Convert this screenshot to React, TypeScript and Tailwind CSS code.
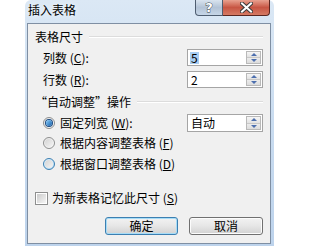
import React from 'react';

const font = "font-['Noto_Sans_CJK_SC','Microsoft_YaHei',sans-serif]";

const Spin: React.FC<{ value: string; selected?: boolean; tall?: boolean; wide?: boolean }> = ({ value, selected, tall }) => (
  <div className={`flex w-[76px] ${tall ? 'h-[18px]' : 'h-[17px]'} border border-[#a5a5a5] bg-white`}>
    <div className="flex flex-1 items-center pl-[2px] text-[12px] leading-none text-black">
      <span className={selected ? 'bg-[#a8cdf1] px-[1px]' : 'px-[1px]'}>{value}</span>
    </div>
    <div className="my-[1px] mr-[1px] flex w-[15px] flex-col border border-[#b9b9b9]">
      <div className="flex flex-1 items-center justify-center border-b border-[#c8c8c8] bg-gradient-to-b from-[#f6f6f6] to-[#e2e2e2]">
        <div className="h-0 w-0 border-x-[3px] border-b-[3px] border-x-transparent border-b-[#4d6fae]" />
      </div>
      <div className="flex flex-1 items-center justify-center bg-gradient-to-b from-[#ececec] to-[#dcdcdc]">
        <div className="h-0 w-0 border-x-[3px] border-t-[3px] border-x-transparent border-t-[#4d6fae]" />
      </div>
    </div>
  </div>
);

const Radio: React.FC<{ checked?: boolean; hover?: boolean }> = ({ checked, hover }) => (
  <div
    className={`flex h-[12px] w-[12px] items-center justify-center rounded-full border ${
      hover ? 'border-[#3c7fb1] bg-gradient-to-br from-[#e3f3fc] to-[#b5dcf6]' : 'border-[#8e8f8f] bg-gradient-to-br from-[#e8e8e8] to-[#fbfbfb]'
    }`}
  >
    {checked && <div className="h-[6px] w-[6px] rounded-full bg-gradient-to-br from-[#8ad1ff] to-[#0f5ea8] ring-1 ring-[#1b4a80]" />}
    {!checked && <div className="h-[8px] w-[8px] rounded-full bg-gradient-to-br from-[#d4d4d4] to-[#f4f4f4]" />}
  </div>
);

const GroupHead: React.FC<{ label: string; mt: string }> = ({ label, mt }) => (
  <div className={`flex h-[14px] items-center pl-[7px] pr-[7px] ${mt}`}>
    <span className="text-[12px] leading-none text-black">{label}</span>
    <div className="ml-[6px] h-0 flex-1 border-t border-[#dcdcdc] border-b-white border-b" />
  </div>
);

export default function App() {
  return (
    <div className={`h-[246px] w-[300px] overflow-hidden bg-white ${font}`}>
      <div className="relative ml-[25px] h-[246px] w-[249px] rounded-t-[6px] bg-gradient-to-b from-[#dbe8f5] via-[#c9dcf0] to-[#bdd3ec]">
        {/* title bar */}
        <div className="flex h-[23px] items-start">
          <span className="ml-[3px] mt-[3px] text-[12px] leading-[14px] text-black [text-shadow:0_0_6px_#ffffff]">插入表格</span>
        </div>
        {/* caption buttons */}
        <div className="absolute left-[170px] top-0 flex h-[16px]">
          <div className="flex h-[16px] w-[28px] items-center justify-center rounded-bl-[4px] border border-t-0 border-[#4e5d70] bg-gradient-to-b from-[#d9e4ef] via-[#b3c3d6] to-[#c6d6e7]">
            <span className="text-[13px] font-bold leading-none text-white font-['DejaVu_Sans',sans-serif] [-webkit-text-stroke:0.8px_#2e3440] [paint-order:stroke_fill]">?</span>
          </div>
          <div className="flex h-[16px] w-[47px] items-center justify-center rounded-br-[4px] border border-l-0 border-t-0 border-[#5a2620] bg-gradient-to-b from-[#e8a190] via-[#c75543] to-[#d57a64]">
            <svg width="13" height="11" viewBox="0 0 13 11">
              <path d="M2 1.5 L11 9.5 M11 1.5 L2 9.5" stroke="#3b3b3b" strokeWidth="4" strokeLinecap="square" />
              <path d="M2 1.5 L11 9.5 M11 1.5 L2 9.5" stroke="#ffffff" strokeWidth="2" strokeLinecap="square" />
            </svg>
          </div>
        </div>
        {/* client area */}
        <div className="ml-[2px] flex h-[221px] w-[244px] flex-col border border-[#7f8fa3] bg-[#f0f0f0] text-[12px] leading-none text-black">
          <GroupHead label="表格尺寸" mt="mt-[6px]" />
          <div className="mt-[5px] flex h-[17px] items-center pl-[15px] pr-[7px]">
            <span className="flex-1">列数 (<span className="underline">C</span>):</span>
            <Spin value="5" selected />
          </div>
          <div className="mt-[5px] flex h-[17px] items-center pl-[15px] pr-[7px]">
            <span className="flex-1">行数 (<span className="underline">R</span>):</span>
            <Spin value="2" />
          </div>
          <GroupHead label="“自动调整”操作" mt="mt-[7px]" />
          <div className="mt-[5px] flex h-[18px] items-center pl-[15px] pr-[7px]">
            <Radio checked />
            <span className="ml-[5px] flex-1">固定列宽 (<span className="underline">W</span>):</span>
            <Spin value="自动" tall />
          </div>
          <div className="mt-[4px] flex h-[14px] items-center pl-[15px]">
            <Radio />
            <span className="ml-[5px]">根据内容调整表格 (<span className="underline">F</span>)</span>
          </div>
          <div className="mt-[7px] flex h-[14px] items-center pl-[15px]">
            <Radio hover />
            <span className="ml-[5px]">根据窗口调整表格 (<span className="underline">D</span>)</span>
          </div>
          <div className="mt-[20px] flex h-[14px] items-center pl-[7px]">
            <div className="flex h-[13px] w-[13px] items-center justify-center border border-[#8e8f8f] bg-white">
              <div className="h-[9px] w-[9px] bg-gradient-to-br from-[#cbcbcb] to-[#f6f6f6]" />
            </div>
            <span className="ml-[4px]">为新表格记忆此尺寸 (<span className="underline">S</span>)</span>
          </div>
          <div className="mt-[12px] flex h-[18px] pl-[77px]">
            <div className="flex w-[73px] items-center justify-center rounded-[3px] border border-[#3c7fb1] bg-gradient-to-b from-[#f2f2f2] via-[#e6e6e6] to-[#d2d2d2] shadow-[inset_0_0_0_1px_#a6dcf7]">
              确定
            </div>
            <div className="ml-[11px] flex w-[74px] items-center justify-center rounded-[3px] border border-[#707070] bg-gradient-to-b from-[#f2f2f2] via-[#e6e6e6] to-[#d2d2d2] shadow-[inset_0_0_0_1px_#fcfcfc]">
              取消
            </div>
          </div>
        </div>
      </div>
    </div>
  );
}
